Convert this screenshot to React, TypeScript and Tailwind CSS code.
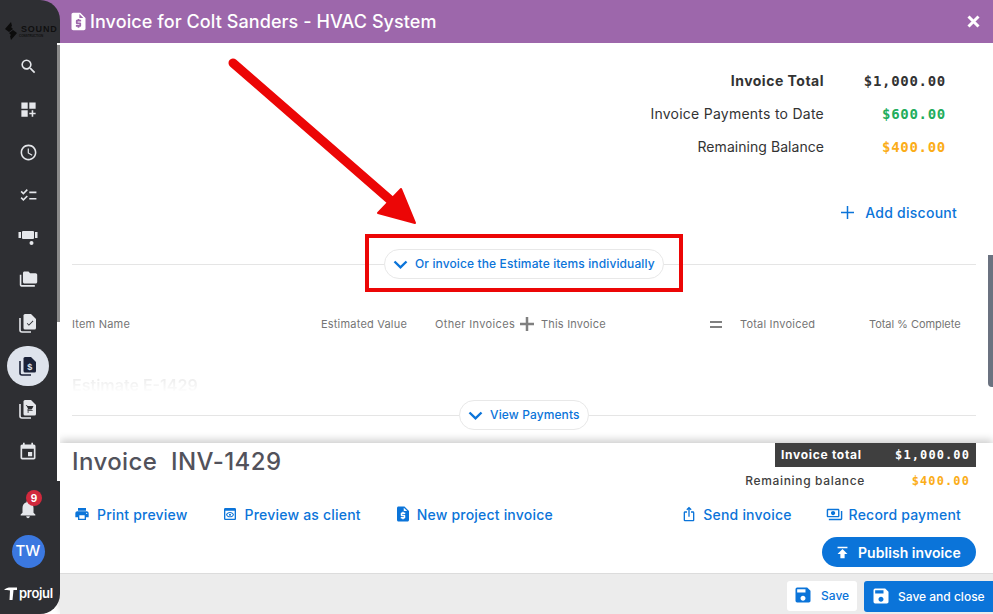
import React from "react";
import {
  MdAccessTime,
  MdChecklist,
  MdDashboardCustomize,
  MdEvent,
  MdFolderCopy,
  MdIosShare,
  MdNotifications,
  MdOutlinePayments,
  MdOutlinePreview,
  MdPrint,
  MdPublish,
  MdRequestQuote,
  MdSave,
  MdSearch,
} from "react-icons/md";

const font = { fontFamily: "Inter, 'Noto Sans', sans-serif" };
const mono = { fontFamily: "'DejaVu Sans Mono', monospace" };

const CART =
  "M7 18c-1.100 0-1.990.900-1.990 2S5.900 22 7 22s2-.900 2-2-.900-2-2-2zM1 2v2h2l3.600 7.590-1.350 2.450c-.160.280-.250.610-.250.960 0 1.100.900 2 2 2h12v-2H7.420c-.140 0-.250-.110-.250-.250l.030-.120.900-1.630h7.450c.750 0 1.410-.410 1.750-1.030l3.580-6.490A1 1 0 0 0 20 4H5.210l-.940-2H1z";
const CHECK = "M9 16.170 4.830 12l-1.420 1.410L9 19 21 7l-1.410-1.410z";

const StackDoc: React.FC<{ color: string; inner: string; glyph?: string; path?: string }> = ({ color, inner, glyph, path }) => (
  <svg width="18" height="20" viewBox="0 0 18 20">
    <path d="M1 5v12a2 2 0 0 0 2 2h9" fill="none" stroke={color} strokeWidth="1.6" />
    <path d="M6 1h6l5 5v9a1.5 1.5 0 0 1-1.5 1.5H6A1.5 1.5 0 0 1 4.500 15V2.500A1.500 1.500 0 0 1 6 1z" fill={color} />
    {glyph && (
      <text x="10.800" y="13.500" textAnchor="middle" fontSize="9" fontWeight="700" fill={inner} fontFamily="Liberation Sans, sans-serif">
        {glyph}
      </text>
    )}
    {path && (
      <svg x="6.500" y="5.500" width="9" height="9" viewBox="0 0 24 24">
        <path d={path} fill={inner} />
      </svg>
    )}
  </svg>
);

const PipeIcon = () => (
  <svg width="20" height="16" viewBox="0 0 20 16" fill="#e5e7eb">
    <rect x="0.500" y="2" width="2.500" height="6" />
    <rect x="4" y="1" width="12" height="8" rx="1" />
    <rect x="17" y="2" width="2.500" height="6" />
    <circle cx="13.500" cy="13" r="2" />
  </svg>
);

const SoundLogo = () => (
  <div className="flex items-center gap-[4px] pl-[5px] pt-[22px] w-[57px]">
    <svg width="12" height="18" viewBox="0 0 12 18" className="shrink-0">
      <path d="M6 0 0 7l4 3 4-3-2-2 1-1zM6 18l6-7-4-3-4 3 2 2-1 1z" fill="#0c0c0c" />
    </svg>
    <div className="flex flex-col leading-none text-[#101010]" style={{ fontFamily: "Liberation Sans, sans-serif" }}>
      <span className="text-[9px] font-bold tracking-[0.8px] leading-[9px]">SOUND</span>
      <span className="text-[3px] font-bold leading-[4px] -ml-[2px]">CONSTRUCTION</span>
    </div>
  </div>
);

const NavRow: React.FC<{ children: React.ReactNode; short?: boolean }> = ({ children, short }) => (
  <div className={`${short ? "h-[41px]" : "h-[43px]"} flex items-center justify-center text-[#e5e7eb]`}>{children}</div>
);

const Sidebar = () => (
  <div className="relative z-10 w-[60px] h-[614px] shrink-0 bg-[#2e2f33] rounded-r-[20px]" style={font}>
    <div className="w-[56px] flex flex-col">
      <div className="h-[45px]">
        <SoundLogo />
      </div>
      <NavRow>
        <MdSearch size={19} />
      </NavRow>
      <NavRow>
        <MdDashboardCustomize size={19} />
      </NavRow>
      <NavRow>
        <MdAccessTime size={19} />
      </NavRow>
      <NavRow>
        <MdChecklist size={19} />
      </NavRow>
      <NavRow short>
        <PipeIcon />
      </NavRow>
      <NavRow>
        <MdFolderCopy size={19} />
      </NavRow>
      <NavRow>
        <StackDoc color="#e5e7eb" inner="#2e2f33" path={CHECK} />
      </NavRow>
      <NavRow>
        <div className="w-[42px] h-[40px] rounded-full bg-[#dee3ec] flex items-center justify-center">
          <StackDoc color="#1b2238" inner="#dee3ec" glyph="$" />
        </div>
      </NavRow>
      <NavRow>
        <StackDoc color="#e5e7eb" inner="#2e2f33" path={CART} />
      </NavRow>
      <NavRow>
        <MdEvent size={20} />
      </NavRow>
      <div className="mt-[14px] h-[43px] flex items-center justify-center text-[#e5e7eb] relative">
        <MdNotifications size={22} />
        <span className="absolute left-[26px] top-[3px] w-4 h-4 rounded-full bg-[#d1293d] text-white text-[10px] font-bold leading-4 text-center">
          9
        </span>
      </div>
      <div className="h-[43px] flex items-center justify-center">
        <div className="w-[33px] h-[33px] rounded-full bg-[#3b78e0] text-white text-[15px] font-medium flex items-center justify-center">
          TW
        </div>
      </div>
      <div className="h-[41px] flex items-center justify-start pl-[4px] text-white gap-[1px]">
        <svg width="14" height="13" viewBox="0 0 14 13" fill="#fff" className="shrink-0">
          <path d="M0 3c2-2 4-2.500 7-2.500h6L13 3H9.500L8.500 13H5.500L6 3.500C4 3 2 3 0 3z" />
        </svg>
        <span className="text-[13px] font-semibold tracking-[-0.3px]">projul</span>
      </div>
    </div>
    {/* sidebar scrollbar, sits on the right edge */}
    <div className="absolute right-0 top-[43px] w-[3px] h-[438px] bg-white pt-[2px]">
      <div className="w-[3px] h-[277px] bg-[#8a8a8a]" />
    </div>
  </div>
);

const Chevron = () => (
  <svg width="15" height="9" viewBox="0 0 15 9" className="shrink-0 mr-[7px]">
    <path d="M1.500 1.500 7.500 7.300 13.500 1.500" fill="none" stroke="#0b74d9" strokeWidth="2.400" />
  </svg>
);

const Pill: React.FC<{ label: string; width: string }> = ({ label, width }) => (
  <div className="flex items-center h-[30px]">
    <div className="flex-1 h-px bg-[#e5e5e5]" />
    <div className={`${width} h-[30px] rounded-full border border-[#e8e8e8] bg-white flex items-center pl-[8px] text-[#0b74d9] text-[12px] font-medium tracking-[0.12px] whitespace-nowrap`}>
      <Chevron />
      {label}
    </div>
    <div className="flex-1 h-px bg-[#e5e5e5]" />
  </div>
);

const SummaryRow: React.FC<{ label: string; value: string; valueColor: string; labelClass: string }> = ({ label, value, valueColor, labelClass }) => (
  <div className="h-[33px] flex items-center justify-end pr-[47px]">
    <span className={`text-[14px] text-[#333] -translate-y-[1px] ${labelClass}`}>{label}</span>
    <span className={`w-[122px] text-right text-[14px] font-bold tracking-[0.7px] ${valueColor}`} style={mono}>
      {value}
    </span>
  </div>
);

const ActionLink: React.FC<{ icon: React.ReactNode; label: string; iconGap: string }> = ({ icon, label, iconGap }) => (
  <div className={`flex items-center ${iconGap} text-[#0b74d9] text-[14px] font-medium tracking-[0.2px] whitespace-nowrap`}>
    {icon}
    {label}
  </div>
);

export default function App() {
  return (
    <div className="relative w-[993px] h-[614px] overflow-hidden flex bg-white" style={font}>
      <Sidebar />
      <div className="flex-1 min-w-0 flex flex-col">
        <div className="-ml-[20px] h-[43px] shrink-0 bg-[#9d67ab] flex items-center text-white pl-[28px] pr-[13px]">
          <MdRequestQuote size={21} className="mr-[1px] shrink-0" />
          <span className="text-[18px] font-medium tracking-[0.08px]">Invoice for Colt Sanders - HVAC System</span>
          <svg width="13" height="13" viewBox="0 0 13 13" className="ml-auto">
            <path d="M1.500 1.500 11.500 11.500M11.500 1.500 1.500 11.500" stroke="#fff" strokeWidth="3" />
          </svg>
        </div>

        <div className="relative h-[400px] shrink-0 overflow-hidden pt-[22px]">
          <SummaryRow label="Invoice Total" value="$1,000.00" valueColor="text-[#333]" labelClass="font-bold tracking-[0.5px]" />
          <SummaryRow label="Invoice Payments to Date" value="$600.00" valueColor="text-[#22ad5c]" labelClass="tracking-[0.25px]" />
          <SummaryRow label="Remaining Balance" value="$400.00" valueColor="text-[#fbad18]" labelClass="tracking-[0.05px]" />

          <div className="mt-[32px] h-[32px] flex items-center justify-end pr-[36px] text-[#0b74d9] text-[14px] font-medium tracking-[0.25px]">
            <svg width="13" height="13" viewBox="0 0 13 13" className="mr-[11px]">
              <path d="M6.500 0v13M0 6.500h13" stroke="#0b74d9" strokeWidth="1.500" />
            </svg>
            Add discount
          </div>

          <div className="mt-[21px] ml-[12px] mr-[17px]">
            <Pill label="Or invoice the Estimate items individually" width="w-[280px]" />
          </div>

          <div className="mt-[35px] ml-[12px] h-[20px] grid grid-cols-[249px_114px_85px_21px_169px_30px_129px_auto] items-center text-[11px] tracking-[0.2px] text-[#757575] whitespace-nowrap">
            <span>Item Name</span>
            <span>Estimated Value</span>
            <span className="tracking-[0.35px]">Other Invoices</span>
            <svg width="14" height="14" viewBox="0 0 14 14">
              <path d="M7 0v14M0 7h14" stroke="#808080" strokeWidth="2.500" />
            </svg>
            <span>This Invoice</span>
            <div className="flex flex-col gap-[3px]">
              <div className="w-[12px] h-[2px] bg-[#808080]" />
              <div className="w-[12px] h-[2px] bg-[#808080]" />
            </div>
            <span>Total Invoiced</span>
            <span className="tracking-[-0.05px]">Total % Complete</span>
          </div>

          <div className="mt-[41px] ml-[12px] h-[18px] overflow-hidden text-[16px] leading-[20px] font-semibold w-fit bg-gradient-to-b from-[#e8e8e8] to-white bg-clip-text text-transparent">
            Estimate E-1429
          </div>

          <div className="mt-[7px] ml-[12px] mr-[17px]">
            <Pill label="View Payments" width="w-[130px]" />
          </div>

          <div className="absolute right-0 top-[212px] w-[5px] h-[132px] bg-[#6b7280] rounded-bl-[4px]" />
        </div>

        <div className="relative flex-1 flex flex-col bg-white shadow-[0_-3px_8px_rgba(0,0,0,0.2)]">
          <div className="flex justify-between pl-[12px] pr-[17px] h-[48px]">
            <div className="text-[24px] leading-[38px] font-medium text-[#52525b] whitespace-pre tracking-[0.42px]">Invoice  INV-1429</div>
            <div className="flex flex-col">
              <div className="self-end w-[201px] h-[24px] bg-[#3f3f3f] text-white flex items-center justify-between px-[6px]">
                <span className="text-[12px] font-bold tracking-[0.7px]">Invoice total</span>
                <span className="text-[12px] font-bold tracking-[1.1px]" style={mono}>
                  $1,000.00
                </span>
              </div>
              <div className="mt-[4px] h-[20px] flex items-center justify-end pr-[6px]">
                <span className="text-[12px] font-medium tracking-[0.65px] text-[#3f3f3f]">Remaining balance</span>
                <span className="w-[105px] text-right text-[12px] font-bold tracking-[1.1px] text-[#fbad18]" style={mono}>
                  $400.00
                </span>
              </div>
            </div>
          </div>

          <div className="mt-[13px] h-[20px] flex items-center pl-[14px] pr-[32px]">
            <ActionLink icon={<MdPrint size={16} />} label="Print preview" iconGap="gap-[7px]" />
            <div className="ml-[34px]">
              <ActionLink icon={<MdOutlinePreview size={16} />} label="Preview as client" iconGap="gap-[7px]" />
            </div>
            <div className="ml-[33px]">
              <ActionLink icon={<MdRequestQuote size={18} />} label="New project invoice" iconGap="gap-[5px]" />
            </div>
            <div className="ml-auto">
              <ActionLink icon={<MdIosShare size={16} />} label="Send invoice" iconGap="gap-[6px]" />
            </div>
            <div className="ml-[34px]">
              <ActionLink icon={<MdOutlinePayments size={17} />} label="Record payment" iconGap="gap-[6px]" />
            </div>
          </div>

          <div className="mt-[13px] flex justify-end pr-[17px]">
            <div className="w-[154px] h-[30px] rounded-full bg-[#0b74d9] text-white flex items-center pl-[12px] gap-[7px] text-[14px] font-semibold tracking-[0.05px] whitespace-nowrap">
              <MdPublish size={17} />
              Publish invoice
            </div>
          </div>

          <div className="mt-[6px] flex-1 bg-[#ececec] border-t border-[#dcdcdc] flex items-start justify-end pt-[7px] gap-[7px]">
            <div className="w-[70px] h-[30px] rounded-[3px] bg-white text-[#0b74d9] flex items-center pl-[6px] gap-[8px] text-[12px] font-medium">
              <MdSave size={20} className="-translate-y-[1px]" />
              Save
            </div>
            <div className="w-[129px] h-[31px] rounded-l-[3px] bg-[#0b74d9] text-white flex items-center pl-[7px] gap-[7px] text-[12px] font-medium whitespace-nowrap">
              <MdSave size={20} className="-translate-y-[1px]" />
              Save and close
            </div>
          </div>
        </div>
      </div>

      {/* annotation drawn on top of the screenshot */}
      <svg className="absolute left-0 top-0 z-20 pointer-events-none" width="993" height="614" viewBox="0 0 993 614">
        <path d="M233 63 396 205" stroke="#ec0606" strokeWidth="9" strokeLinecap="round" fill="none" />
        <path d="M401 189 415 223 378 213z" fill="#ec0606" stroke="#ec0606" strokeWidth="2" strokeLinejoin="round" />
      </svg>
      <div className="absolute z-20 left-[365px] top-[234px] w-[318px] h-[58px] border-[4px] border-[#ec0606] pointer-events-none" />
    </div>
  );
}
